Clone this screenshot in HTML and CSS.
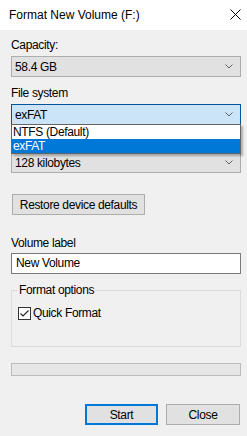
FILE: index.html
```html
<!DOCTYPE html>
<html>
<head>
<meta charset="utf-8">
<link rel="stylesheet" href="styles.css">
</head>
<body>
<div class="window">
  <div class="titlebar">
    <span class="title">Format New Volume (F:)</span>
    <svg class="close-x" width="11" height="11" viewBox="0 0 11 11"><path d="M0.5 0.5L10.5 10.5M10.5 0.5L0.5 10.5" stroke="#000" stroke-width="1" fill="none"/></svg>
  </div>
  <div class="content">
    <div class="label">Capacity:</div>
    <div class="combo"><span class="combo-text">58.4 GB</span><svg class="chev" width="8" height="5" viewBox="0 0 8 5"><path d="M0.5 0.5L4 4L7.5 0.5" stroke="#606060" fill="none"/></svg></div>

    <div class="label gap">File system</div>
    <div class="combo-wrap">
      <div class="combo focused"><span class="combo-text">exFAT</span><svg class="chev" width="8" height="5" viewBox="0 0 8 5"><path d="M0.5 0.5L4 4L7.5 0.5" stroke="#606060" fill="none"/></svg></div>
      <ul class="dropdown">
        <li class="item">NTFS (Default)</li>
        <li class="item selected">exFAT</li>
      </ul>
    </div>

    <div class="label gap spacer"></div>
    <div class="combo"><span class="combo-text">128 kilobytes</span><svg class="chev" width="8" height="5" viewBox="0 0 8 5"><path d="M0.5 0.5L4 4L7.5 0.5" stroke="#606060" fill="none"/></svg></div>

    <button class="btn restore">Restore device defaults</button>

    <div class="label vol">Volume label</div>
    <div class="input">New Volume</div>

    <fieldset class="group">
      <legend class="legend">Format options</legend>
      <div class="check">
        <span class="box"><svg width="11" height="11" viewBox="0 0 11 11"><path d="M1.5 5.5L4 8L9.5 2.5" stroke="#222" stroke-width="1.1" fill="none"/></svg></span>
        <span class="check-text">Quick Format</span>
      </div>
    </fieldset>

    <div class="progress"></div>

    <div class="actions">
      <button class="btn start">Start</button>
      <button class="btn closebtn">Close</button>
    </div>
  </div>
</div>
</body>
</html>
```

FILE: styles.css
```css
* { box-sizing: border-box; }
html, body { margin: 0; padding: 0; }
body {
  width: 247px;
  height: 436px;
  background: #f0f0f0;
  font-family: "Liberation Sans", Arial, sans-serif;
  font-size: 12px;
  color: #000;
  overflow: hidden;
}
.window { width: 247px; height: 436px; background: #f0f0f0; }
.titlebar {
  height: 30px;
  background: #fff;
  display: flex;
  align-items: center;
  justify-content: space-between;
  padding: 0 6px 0 9px;
}
.title { font-size: 12px; line-height: 16px; padding-bottom: 1px; }
.close-x { display: block; margin-top: -1px; }
.content { padding: 7px 6px 0 11px; letter-spacing: -0.35px; }
.label { height: 16px; line-height: 16px; margin-bottom: 3px; white-space: nowrap; }
.label.gap { margin-top: 8px; }
.combo {
  height: 21px;
  border: 1px solid #adadad;
  background: #e1e1e1;
  display: flex;
  align-items: center;
  justify-content: space-between;
  padding: 0 7px 0 3px;
}
.combo.focused { background: #cce4f7; border-color: #005499; }
.combo-text { line-height: 16px; }
.chev { display: block; }
.combo-wrap { position: relative; }
.dropdown {
  position: absolute;
  left: 0;
  top: 20px;
  width: 230px;
  margin: 0;
  padding: 0;
  list-style: none;
  border: 1px solid #646464;
  background: #fff;
  box-shadow: 2px 2px 2px rgba(0,0,0,0.28);
  z-index: 2;
}
.item { height: 14px; line-height: 15px; padding-left: 1px; }
.item.selected { background: #0078d7; color: #fff; }
.btn {
  font-family: "Liberation Sans", Arial, sans-serif;
  font-size: 12px;
  letter-spacing: -0.35px;
  color: #000;
  background: #e1e1e1;
  border: 1px solid #adadad;
  height: 21px;
  padding: 0;
  display: block;
}
.restore { width: 133px; margin: 21px 0 0 1px; }
.label.vol { margin-top: 20px; margin-bottom: 2px; }
.input {
  height: 21px;
  border: 1px solid #7a7a7a;
  background: #fff;
  padding: 0 4px;
  line-height: 19px;
}
.group {
  margin: 8px 0 0 0;
  padding: 8px 6px 25px 6px;
  border: 1px solid #dcdcdc;
  min-width: 0;
}
.legend { padding: 0 1px; line-height: 16px; }
.check { display: flex; align-items: center; height: 15px; }
.box {
  width: 13px; height: 13px;
  border: 1px solid #333;
  background: #fff;
  display: flex; align-items: center; justify-content: center;
}
.box svg { display: block; }
.check-text { margin-left: 2px; line-height: 15px; }
.progress {
  margin-top: 16px;
  height: 13px;
  border: 1px solid #bcbcbc;
  background: #e6e6e6;
}
.actions {
  display: flex;
  justify-content: flex-end;
  gap: 8px;
  margin-top: 28px;
  padding-right: 1px;
}
.start { width: 73px; border: 2px solid #0078d7; }
.closebtn { width: 74px; }
```
